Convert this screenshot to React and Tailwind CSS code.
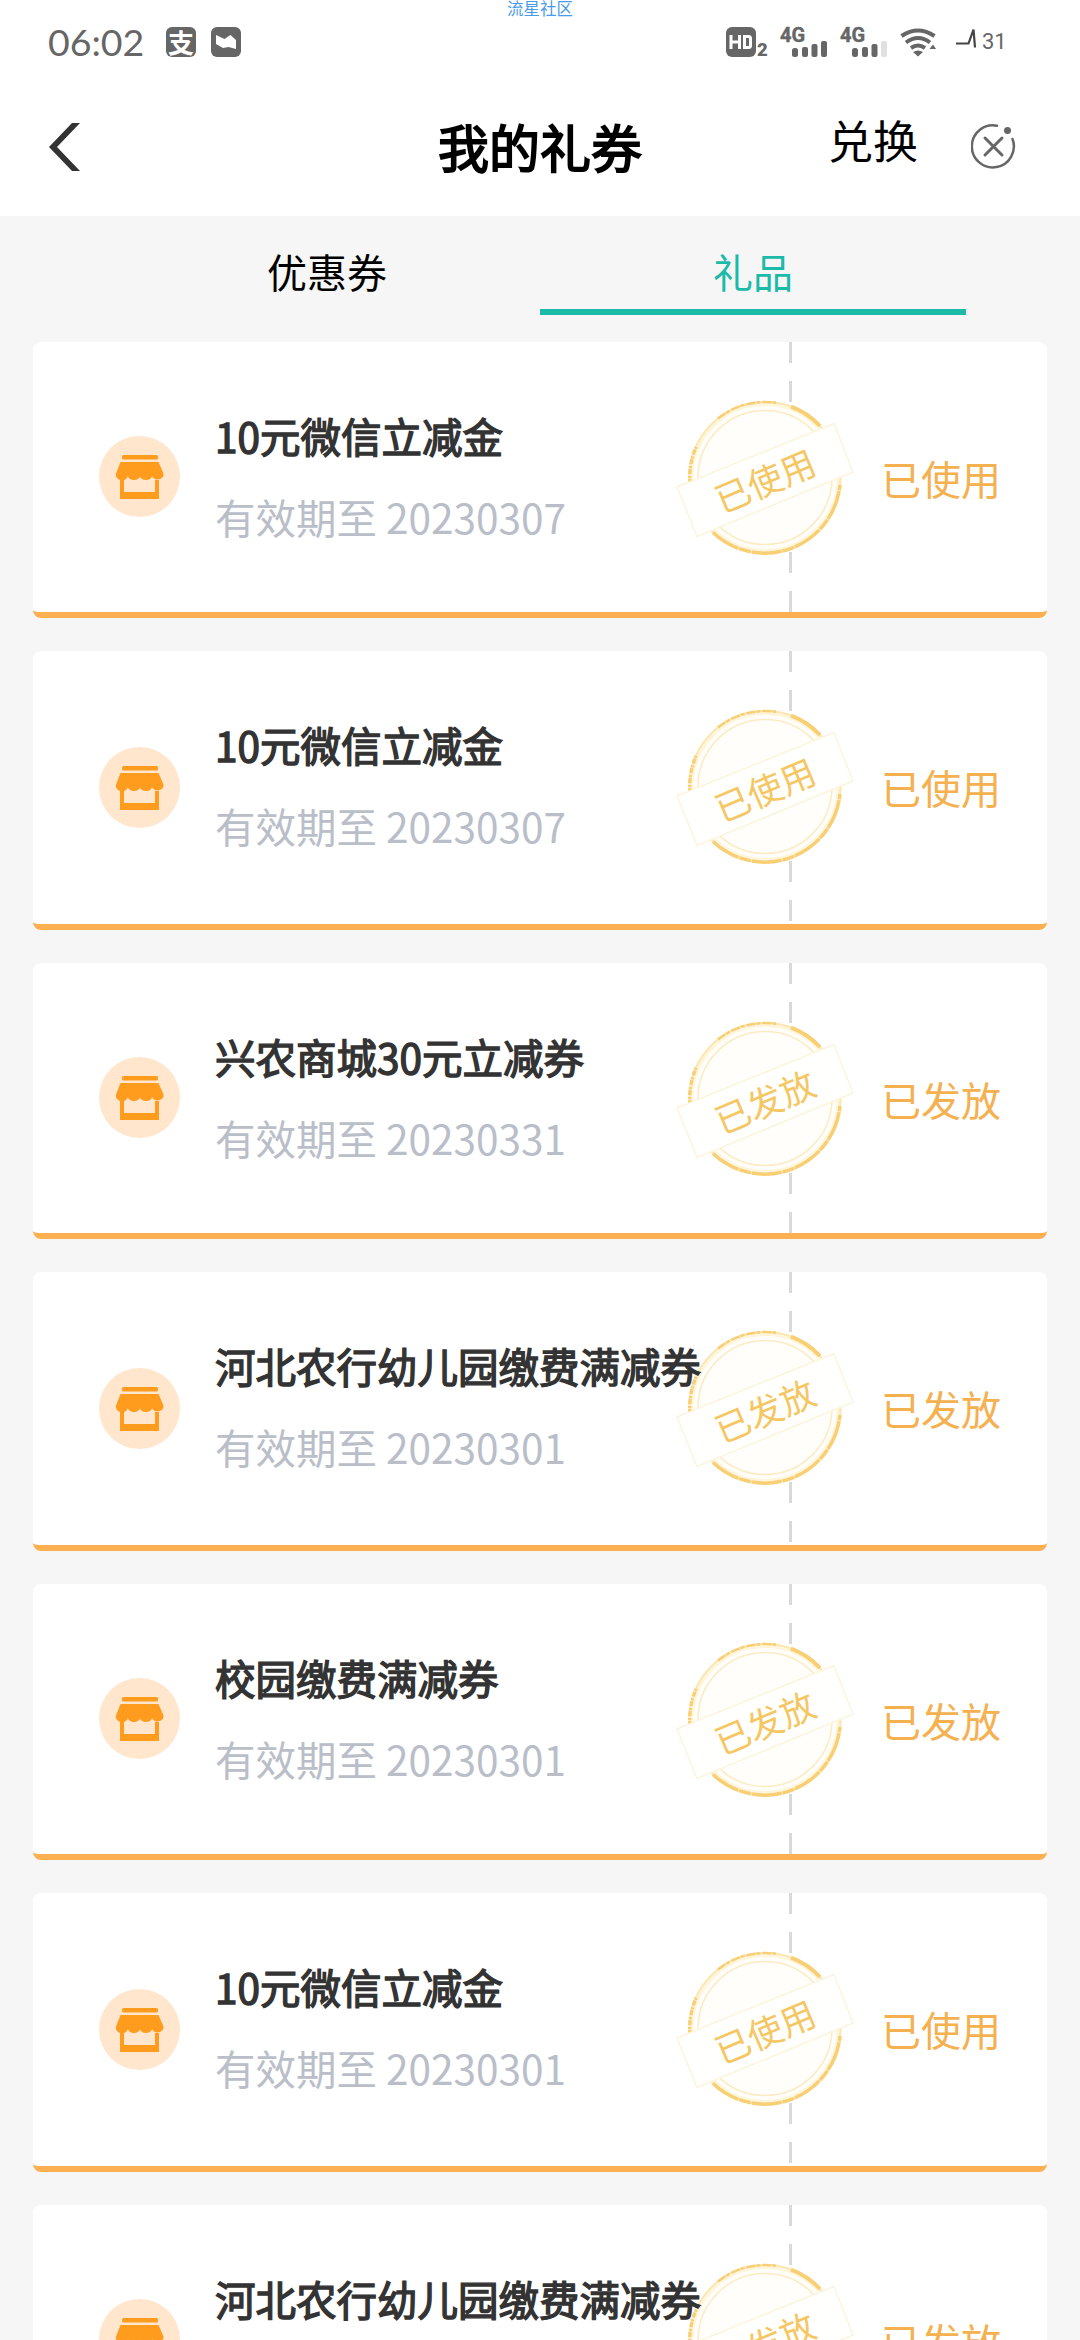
import React from "react";

const coupons = [
  { title: "10元微信立减金", date: "20230307", status: "已使用" },
  { title: "10元微信立减金", date: "20230307", status: "已使用" },
  { title: "兴农商城30元立减券", date: "20230331", status: "已发放" },
  { title: "河北农行幼儿园缴费满减券", date: "20230301", status: "已发放" },
  { title: "校园缴费满减券", date: "20230301", status: "已发放" },
  { title: "10元微信立减金", date: "20230301", status: "已使用" },
  { title: "河北农行幼儿园缴费满减券", date: "20230301", status: "已发放" },
];

function ShopIcon() {
  return (
    <svg viewBox="0 0 81 81" className="block size-[81px]">
      <circle cx="40.5" cy="40.5" r="40.5" fill="#ffe6cd" />
      <rect x="23" y="19" width="36" height="4.5" rx="1.5" fill="#ff9c1e" />
      <path d="M21.500 26h38l5 11.500a6 5.500 0 0 1-11.500 2.500a6 4 0 0 1-12 0a6 4 0 0 1-12 0a6 5.500 0 0 1-12-2.500z" fill="#ff9c1e" />
      <path d="M21 44h4v12h31v-12h4v19H21z" fill="#ff9c1e" />
    </svg>
  );
}

function Stamp({ label }) {
  return (
    <svg viewBox="0 0 190 180" className="block h-[180px] w-[190px]">
      <circle cx="95" cy="87.500" r="77" fill="#fffefb" />
      <circle cx="95" cy="87.500" r="74" fill="none" stroke="#fff5da" strokeWidth="5" />
      <circle cx="95" cy="87.500" r="75.500" fill="none" stroke="#fce6b2" strokeWidth="2" />
      <g fill="none" stroke="#f8cf74">
        <path d="M48 28.500A75.500 75.500 0 0 1 106 12.800" strokeWidth="2.500" strokeDasharray="9 1 4 2" />
        <path d="M121 16.700A75.500 75.500 0 0 1 150 36" strokeWidth="4" />
        <path d="M20 94A75.500 75.500 0 0 1 27 55" strokeWidth="3.500" strokeDasharray="5 1 2 2" />
        <path d="M43 142.500A75.500 75.500 0 0 0 170 95" strokeWidth="3.500" strokeDasharray="30 1 12 1" />
      </g>
      <circle cx="95" cy="87.500" r="67" fill="none" stroke="#fcebc4" strokeWidth="1.500" />
      <path d="M7 97L164 33.500l19 48.500L27 146.500z" fill="#fffffe" stroke="#fdf4de" strokeWidth="1.500" />
      <text x="95.500" y="104.500" textAnchor="middle" fontSize="35" fill="#f5c662" transform="rotate(-23 95 92)">
        {label}
      </text>
    </svg>
  );
}

function Coupon({ title, date, status, tall }) {
  return (
    <article className={`${tall ? "h-[279px]" : "h-[276px]"} relative flex shrink-0 items-start rounded-lg border-b-[6px] border-[#fcb052] bg-white`}>
      <div className="absolute top-0 left-[756px] h-[72px] w-[3px] bg-[repeating-linear-gradient(to_bottom,#d9d9dc_0_21px,transparent_21px_39px)]" />
      <div className={`${tall ? "bottom-[3px]" : "bottom-0"} absolute left-[756px] h-[60px] w-[3px] bg-[repeating-linear-gradient(to_top,#d9d9dc_0_21px,transparent_21px_39px)]`} />
      <div className="absolute top-[48px] left-[637px]">
        <Stamp label={status} />
      </div>
      <div className="relative flex h-[268px] w-full items-center pl-[66px]">
        <div className={`${tall ? "pt-[5px]" : ""} shrink-0`}>
          <ShopIcon />
        </div>
        <div className="ml-[35px] flex flex-1 flex-col gap-[21px] whitespace-nowrap text-[40.5px] leading-[60px]">
          <h2 className="text-[#333] [-webkit-text-stroke:1.4px_#333]">{title}</h2>
          <p className="text-[#b9bec9]">有效期至 {date}</p>
        </div>
        <span className="mr-[46px] pt-[3px] text-[40px] leading-[60px] text-[#f5b04f]">{status}</span>
      </div>
    </article>
  );
}

function Signal({ weak }) {
  return (
    <svg viewBox="0 0 50 32" className="block h-8 w-[50px] overflow-visible" fill="#666">
      <text x="0" y="14.500" fontFamily="Roboto" fontWeight="700" fontSize="20" stroke="#666" strokeWidth="0.400">4G</text>
      <rect x="12" y="21" width="6" height="9" rx="2.500" />
      <rect x="22" y="20" width="6" height="10" rx="2" />
      <rect x="31.500" y="17" width="6" height="13" rx="2" />
      <rect x="41" y="14" width="6" height="16" rx="2" fill={weak ? "#e0e0e0" : "#666"} />
    </svg>
  );
}

function StatusBar() {
  return (
    <div className="relative flex h-[84px] items-center text-[#666]">
      <span className="absolute inset-x-0 top-0 text-center text-[16.500px] leading-[17px] text-[#4a9be8]">流星社区</span>
      <span className="mb-px ml-[48px] w-[118px] font-[Lato] text-[37.500px] leading-[82px]">06:02</span>
      <span className="flex size-[30px] items-center justify-center rounded-md bg-[#666] text-[26px] leading-[30px] font-bold text-white">支</span>
      <svg viewBox="0 0 30 30" className="ml-[15px] size-[30px]">
        <rect width="30" height="30" rx="6" fill="#666" />
        <path d="M5 8l8.500 4 6-4 5.500 5v9l-7.500-2-5.500 1-7-4z" fill="#fff" />
      </svg>
      <div className="ml-auto flex h-[30px] items-start pr-[74px]">
        <svg viewBox="0 0 44 30" className="h-[30px] w-[44px] overflow-visible">
          <rect width="30" height="30" rx="6" fill="#666" />
          <path d="M5 8v14M13.500 8v14M5 15h8.500M18.500 9.500h4q2 0 2 2v7q0 2-2 2h-4z" stroke="#fff" strokeWidth="3" fill="none" />
          <text x="31" y="28.500" fontFamily="Roboto" fontWeight="900" fontSize="18.500" fill="#666">2</text>
        </svg>
        <div className="ml-[10px]"><Signal /></div>
        <div className="ml-[10px]"><Signal weak /></div>
        <svg viewBox="0 0 36 30" className="ml-[10px] h-[30px] w-9" fill="none" stroke="#666" strokeWidth="4">
          <path d="M1.500 9q16.500-11 33 0M6 15.500q12-9 24 0M11 21q7-5 14 0" />
          <path d="M13 25q5-3 10 0l-5 4.500z" fill="#666" stroke="none" />
          <path d="M29.500 22l3.500-4.500L36 22z" fill="#666" stroke="none" />
        </svg>
        <svg viewBox="0 0 22 22" className="ml-5 h-[22px] w-[22px]" fill="none" stroke="#444" strokeWidth="2.200">
          <path d="M0 16.500h12.500l5-14 1.500 18" />
        </svg>
        <span className="ml-1 w-6 font-[Roboto] text-[22px] leading-[29px]">31</span>
      </div>
    </div>
  );
}

function Header() {
  return (
    <header className="relative flex h-[132px] items-center justify-between pr-[64px] pl-[48px]">
      <svg viewBox="0 0 33 50" className="mb-[7px] h-[50px] w-[33px]">
        <path d="M24 1h8L9 25l23 24h-8L1 25z" fill="#333" />
      </svg>
      <h1 className="absolute inset-x-0 top-[24px] text-center text-[51px] leading-[76px] text-black [-webkit-text-stroke:1.8px_#000]">我的礼券</h1>
      <div className="flex items-center">
        <span className="mr-[53px] mb-[20px] text-[45px] leading-[60px] text-black">兑换</span>
        <svg viewBox="0 0 45 45" className="mb-2 size-[45px]" fill="none" stroke="#666" strokeWidth="2.500" strokeLinecap="round">
          <path d="M26 1.800A21 21 0 1 0 41.500 15" />
          <path d="M14 14l17 17M31 14L14 31" strokeWidth="3" />
          <circle cx="36.500" cy="6.500" r="3.500" fill="#666" stroke="none" />
        </svg>
      </div>
    </header>
  );
}

export default function App() {
  return (
    <div className="flex h-[2340px] w-[1080px] flex-col overflow-hidden bg-[#f6f6f6] font-['Noto_Sans_CJK_SC',sans-serif]">
      <div className="h-[216px] shrink-0 bg-white">
        <StatusBar />
        <Header />
      </div>
      <nav className="mx-[114px] flex h-[99px] shrink-0 text-[40px] leading-[60px] text-black">
        <div className="flex-1 pt-[25px] text-center">优惠券</div>
        <div className="flex-1 border-b-[6px] border-[#1cbaa9] pt-[25px] text-center text-[#1cbaa9]">礼品</div>
      </nav>
      <main className="mx-[33px] mt-[27px] flex flex-col gap-[33px]">
        {coupons.map((coupon, i) => (
          <Coupon key={i} {...coupon} tall={i % 2 === 1} />
        ))}
      </main>
    </div>
  );
}
